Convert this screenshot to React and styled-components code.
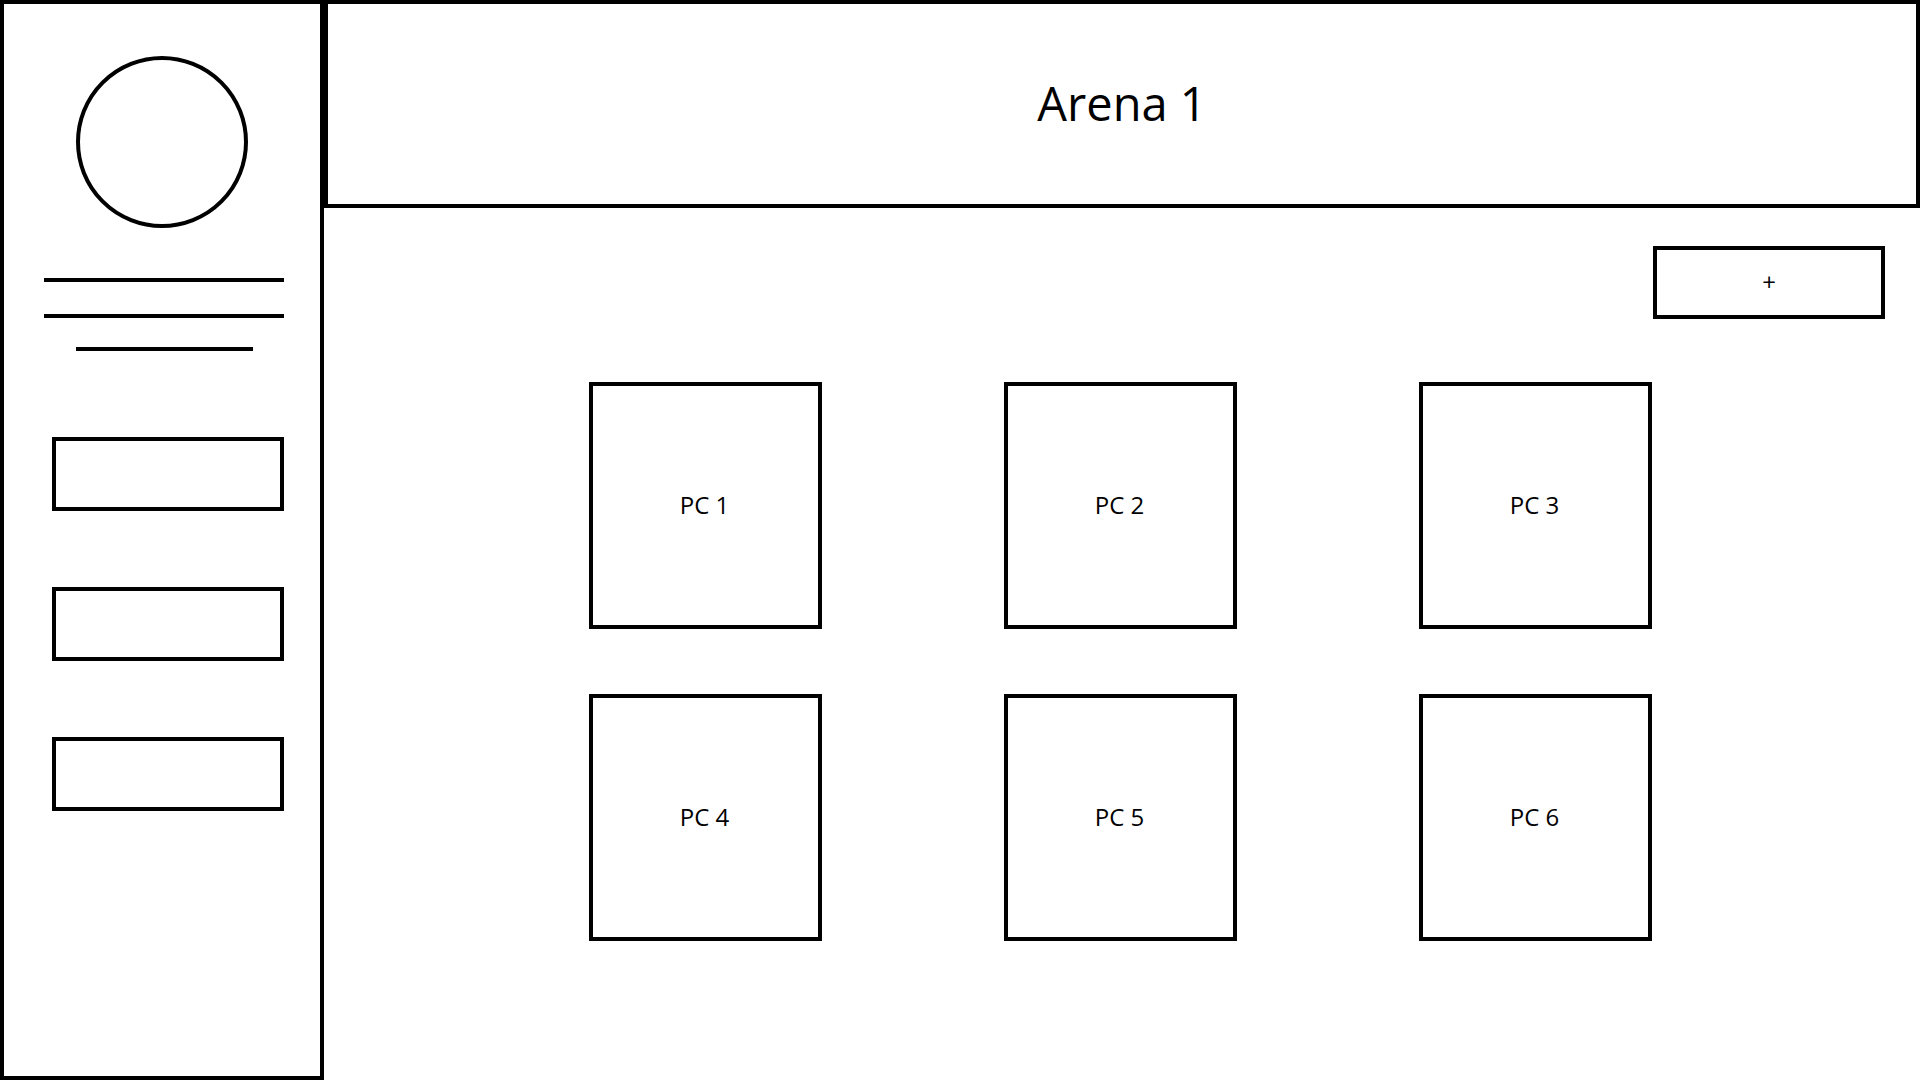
import React from 'react';
import styled, { createGlobalStyle } from 'styled-components';

/**
 * Arena overview wireframe: sidebar with avatar + menu, header, and a PC grid
 */

const GlobalStyle = createGlobalStyle`
  * {
    box-sizing: border-box;
  }

  body {
    margin: 0;
    background: #ffffff;
    color: #000000;
    font-family: "Open Sans", "Liberation Sans", sans-serif;
    overflow: hidden;
  }
`;

const StyledPage = styled.div`
  display: flex;
  width: 1920px;
  height: 1080px;
`;

const StyledSidebar = styled.aside`
  width: 324px;
  height: 100%;
  flex-shrink: 0;
  border: 4px solid #000;
  display: flex;
  flex-direction: column;
  align-items: flex-start;
`;

const StyledAvatar = styled.svg`
  width: 172px;
  height: 172px;
  margin: 52px 0 0 72px;
`;

const StyledLine = styled.div`
  height: 4px;
  background: #000;
  width: ${({ $width }) => $width}px;
  margin-top: ${({ $top }) => $top}px;
  margin-left: ${({ $left }) => $left}px;
`;

const StyledMenuButton = styled.button`
  width: 232px;
  height: 74px;
  margin-left: 48px;
  margin-top: ${({ $top }) => $top}px;
  border: 4px solid #000;
  background: #fff;
  padding: 0;
  cursor: pointer;
`;

const StyledMain = styled.main`
  flex: 1;
  display: flex;
  flex-direction: column;
`;

const StyledHeader = styled.header`
  height: 208px;
  border: 4px solid #000;
  display: flex;
  align-items: center;
  justify-content: center;
  padding-bottom: 2px;

  & h1 {
    margin: 0;
    font-size: 47px;
    font-weight: 400;
    line-height: 1;
  }
`;

const StyledToolbar = styled.div`
  display: flex;
  justify-content: flex-end;
  padding: 38px 35px 0 0;
`;

const StyledAddButton = styled.button`
  width: 232px;
  height: 73px;
  border: 4px solid #000;
  background: #fff;
  font-family: "Open Sans", "Liberation Sans", sans-serif;
  font-size: 24px;
  line-height: 1;
  color: #000;
  cursor: pointer;
  display: flex;
  align-items: center;
  justify-content: center;
  padding: 0 0 2px 0;
`;

const StyledGrid = styled.div`
  display: grid;
  grid-template-columns: repeat(3, 233px);
  grid-auto-rows: 247px;
  column-gap: 182px;
  row-gap: 65px;
  justify-content: center;
  margin-top: 63px;
  padding-right: 3px;
`;

const StyledPcCard = styled.div`
  border: 4px solid #000;
  display: flex;
  align-items: center;
  justify-content: center;
  padding: 0 2px 2px 0;
  font-size: 24px;
  line-height: 1;
`;

const pcs = ['PC 1', 'PC 2', 'PC 3', 'PC 4', 'PC 5', 'PC 6'];

function Sidebar() {
  return (
    <StyledSidebar>
      <StyledAvatar viewBox="0 0 172 172">
        <circle cx="86" cy="86" r="84" fill="none" stroke="#000" strokeWidth="4" />
      </StyledAvatar>

      {/* name / info placeholder lines */}
      <StyledLine $width={240} $top={50} $left={40} />
      <StyledLine $width={240} $top={32} $left={40} />
      <StyledLine $width={177} $top={29} $left={72} />

      <StyledMenuButton $top={86} />
      <StyledMenuButton $top={76} />
      <StyledMenuButton $top={76} />
    </StyledSidebar>
  );
}

export default function App() {
  return (
    <>
      <GlobalStyle />
      <StyledPage>
        <Sidebar />
        <StyledMain>
          <StyledHeader>
            <h1>Arena 1</h1>
          </StyledHeader>

          <StyledToolbar>
            <StyledAddButton type="button">+</StyledAddButton>
          </StyledToolbar>

          <StyledGrid>
            {pcs.map((pc) => (
              <StyledPcCard key={pc}>{pc}</StyledPcCard>
            ))}
          </StyledGrid>
        </StyledMain>
      </StyledPage>
    </>
  );
}
